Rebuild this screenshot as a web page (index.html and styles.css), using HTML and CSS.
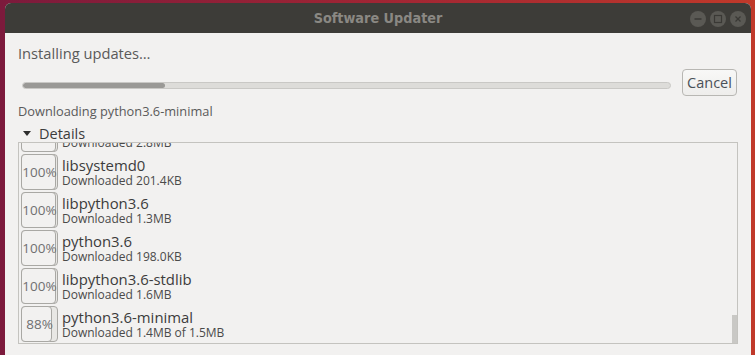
FILE: index.html
```html
<!DOCTYPE html>
<html lang="en">

<head>
    <meta charset="UTF-8">
    <title>Software Updater</title>
    <link rel="stylesheet" href="styles.css">
</head>

<body>
    <div class="window">
        <div class="titlebar">
            <span class="title">Software Updater</span>
            <div class="win-buttons">
                <span class="win-btn">
                    <svg width="16" height="16" viewBox="0 0 16 16"><path d="M4.5 8h7" stroke="#3a3935" stroke-width="1.3"/></svg>
                </span>
                <span class="win-btn">
                    <svg width="16" height="16" viewBox="0 0 16 16"><rect x="4.5" y="4.5" width="7" height="7" fill="none" stroke="#3a3935" stroke-width="1.2"/></svg>
                </span>
                <span class="win-btn">
                    <svg width="16" height="16" viewBox="0 0 16 16"><path d="M5.5 5.5l5 5M10.5 5.5l-5 5" stroke="#3a3935" stroke-width="1.3"/></svg>
                </span>
            </div>
        </div>

        <div class="content">
            <div class="heading">Installing updates…</div>

            <div class="progress-row">
                <div class="progress">
                    <div class="progress-fill" style="width: 22%"></div>
                </div>
                <button class="cancel">Cancel</button>
            </div>

            <div class="status">Downloading python3.6-minimal</div>

            <div class="expander">
                <span class="arrow"></span>
                <span>Details</span>
            </div>

            <div class="frame">
                <div class="rows">
                    <div class="row">
                        <div class="pct"><div class="pct-fill" style="width: 100%"></div><span>100%</span></div>
                        <div class="info">
                            <div class="name">libsystemd-shared</div>
                            <div class="detail">Downloaded 2.8MB</div>
                        </div>
                    </div>
                    <div class="row">
                        <div class="pct"><div class="pct-fill" style="width: 100%"></div><span>100%</span></div>
                        <div class="info">
                            <div class="name">libsystemd0</div>
                            <div class="detail">Downloaded 201.4KB</div>
                        </div>
                    </div>
                    <div class="row">
                        <div class="pct"><div class="pct-fill" style="width: 100%"></div><span>100%</span></div>
                        <div class="info">
                            <div class="name">libpython3.6</div>
                            <div class="detail">Downloaded 1.3MB</div>
                        </div>
                    </div>
                    <div class="row">
                        <div class="pct"><div class="pct-fill" style="width: 100%"></div><span>100%</span></div>
                        <div class="info">
                            <div class="name">python3.6</div>
                            <div class="detail">Downloaded 198.0KB</div>
                        </div>
                    </div>
                    <div class="row">
                        <div class="pct"><div class="pct-fill" style="width: 100%"></div><span>100%</span></div>
                        <div class="info">
                            <div class="name">libpython3.6-stdlib</div>
                            <div class="detail">Downloaded 1.6MB</div>
                        </div>
                    </div>
                    <div class="row">
                        <div class="pct"><div class="pct-fill" style="width: 88%"></div><span>88%</span></div>
                        <div class="info">
                            <div class="name">python3.6-minimal</div>
                            <div class="detail">Downloaded 1.4MB of 1.5MB</div>
                        </div>
                    </div>
                </div>
                <div class="scrollbar"></div>
            </div>
        </div>
    </div>
</body>

</html>
```

FILE: styles.css
```css
html,
body {
    margin: 0;
    padding: 0;
    height: 355px;
    overflow: hidden;
}

body {
    font-family: "Open Sans", "Liberation Sans", sans-serif;
    background: linear-gradient(90deg, #7c1a3c 0%, #a02534 50%, #c0392a 100%);
    padding-top: 3px;
    box-sizing: border-box;
}

.window {
    margin: 0 4px 0 5px;
    height: 352px;
    background-color: #f2f1f0;
    border-radius: 6px 6px 0 0;
    overflow: hidden;
}

/* title bar */
.titlebar {
    height: 30px;
    background-color: #3d3c38;
    display: flex;
    align-items: center;
    justify-content: center;
    position: relative;
}

.title {
    font-family: "DejaVu Sans Condensed", "DejaVu Sans", sans-serif;
    font-stretch: condensed;
    font-weight: bold;
    font-size: 14.3px;
    color: #8a8883;
}

.win-buttons {
    position: absolute;
    right: 5px;
    top: 8px;
    display: flex;
    gap: 4px;
}

.win-btn {
    width: 16px;
    height: 16px;
    border-radius: 50%;
    background-color: #5a5954;
    display: block;
}

.win-btn svg {
    display: block;
}

/* body */
.content {
    padding: 0 13px;
    color: #4c4c4c;
}

.heading {
    margin-top: 11px;
    font-size: 14.7px;
    line-height: 19px;
    color: #5a5a5a;
}

.progress-row {
    margin-top: 6px;
    display: flex;
    align-items: flex-end;
}

.progress {
    flex: 1;
    height: 7px;
    margin: 0 11px 7px 4px;
    background-color: #dddcd9;
    border: 1px solid #c9c8c5;
    border-radius: 5px;
    box-sizing: border-box;
    overflow: hidden;
}

.progress-fill {
    height: 100%;
    background-color: #9a9996;
    border-radius: 5px;
}

.cancel {
    width: 55px;
    height: 27px;
    margin-right: 1px;
    padding: 0;
    font-family: inherit;
    font-size: 14.5px;
    color: #4a5058;
    background: linear-gradient(#f8f8f7, #eeedeb);
    border: 1px solid #b8b7b3;
    border-radius: 4px;
}

.status {
    margin-top: 8px;
    font-size: 12.8px;
    line-height: 15px;
    color: #5a5a5a;
}

.expander {
    margin-top: 6px;
    display: flex;
    align-items: center;
    gap: 8px;
    font-size: 14.5px;
    line-height: 17px;
    color: #3c3c3c;
    padding-left: 5px;
}

.arrow {
    width: 0;
    height: 0;
    border-left: 4.5px solid transparent;
    border-right: 4.5px solid transparent;
    border-top: 5px solid #2e2e2e;
}

.frame {
    height: 202px;
    border: 1px solid #c4c3bf;
    overflow: hidden;
    position: relative;
    box-sizing: border-box;
}

.rows {
    margin-top: -27px;
    padding-left: 2px;
}

.row {
    display: flex;
    align-items: center;
    gap: 4px;
    height: 36px;
    margin-bottom: 2px;
}

.pct {
    width: 37px;
    height: 36px;
    box-sizing: border-box;
    position: relative;
    background-color: #e8e7e4;
    border: 1px solid #a9a8a4;
    border-radius: 4px;
    display: flex;
    align-items: center;
    justify-content: center;
    font-size: 13.5px;
    color: #707070;
}

.pct-fill {
    position: absolute;
    left: -1px;
    top: -1px;
    bottom: -1px;
    box-sizing: border-box;
    background-color: #f2f1f0;
    border: 1px solid #a9a8a4;
    border-radius: 4px;
}

.pct span {
    position: relative;
    white-space: nowrap;
}

.info {
    display: flex;
    flex-direction: column;
}

.name {
    font-size: 14.9px;
    line-height: 18px;
    color: #3c3c3c;
}

.detail {
    font-size: 12px;
    line-height: 14px;
    color: #4a4a4a;
}

.scrollbar {
    position: absolute;
    right: 0;
    bottom: 0;
    width: 5px;
    height: 28px;
    background-color: #c9c8c5;
}
```
